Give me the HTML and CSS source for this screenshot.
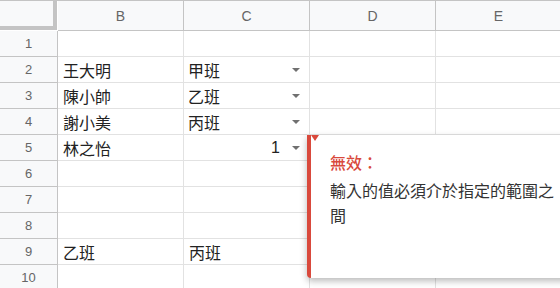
FILE: index.html
```html
<!DOCTYPE html>
<html lang="zh-Hant">
<head>
<meta charset="UTF-8">
<meta name="viewport" content="width=device-width, initial-scale=1.0">
<title>試算表</title>
<link rel="stylesheet" href="styles.css">
</head>
<body>
  <div id="sheet">
    <div class="corner"></div>
    <div class="col-head">B</div>
    <div class="col-head">C</div>
    <div class="col-head">D</div>
    <div class="col-head">E</div>

    <div class="row-head">1</div>
    <div class="cell"></div><div class="cell"></div><div class="cell"></div><div class="cell"></div>

    <div class="row-head">2</div>
    <div class="cell">王大明</div>
    <div class="cell drop">甲班<span class="arrow"></span></div>
    <div class="cell"></div><div class="cell"></div>

    <div class="row-head">3</div>
    <div class="cell">陳小帥</div>
    <div class="cell drop">乙班<span class="arrow"></span></div>
    <div class="cell"></div><div class="cell"></div>

    <div class="row-head">4</div>
    <div class="cell">謝小美</div>
    <div class="cell drop">丙班<span class="arrow"></span></div>
    <div class="cell"></div><div class="cell"></div>

    <div class="row-head">5</div>
    <div class="cell">林之怡</div>
    <div class="cell drop num">1<span class="arrow"></span></div>
    <div class="cell"></div><div class="cell"></div>

    <div class="row-head">6</div>
    <div class="cell"></div><div class="cell"></div><div class="cell"></div><div class="cell"></div>

    <div class="row-head">7</div>
    <div class="cell"></div><div class="cell"></div><div class="cell"></div><div class="cell"></div>

    <div class="row-head">8</div>
    <div class="cell"></div><div class="cell"></div><div class="cell"></div><div class="cell"></div>

    <div class="row-head">9</div>
    <div class="cell">乙班</div>
    <div class="cell">丙班</div>
    <div class="cell"></div><div class="cell"></div>

    <div class="row-head">10</div>
    <div class="cell"></div><div class="cell"></div><div class="cell"></div><div class="cell"></div>

    <div class="error-tip">
      <span class="tip-mark"></span>
      <div class="tip-title">無效：</div>
      <div class="tip-text">輸入的值必須介於指定的範圍之間</div>
    </div>
  </div>
</body>
</html>
```

FILE: styles.css
```css
body {
  margin: 0;
  padding: 0;
  background-color: #fff;
  overflow: hidden;
  font-family: "Liberation Sans", "Noto Sans CJK TC", sans-serif;
}
#sheet {
  position: relative;
  display: grid;
  grid-template-columns: 58px 126px 126px 126px 126px;
  grid-template-rows: 30px repeat(10, 26px);
  border-top: 1px solid #c4c4c4;
}
.corner {
  background-color: #f8f9fa;
  border-right: 4px solid #c4c4c4;
  border-bottom: 4px solid #c4c4c4;
  margin-right: 1px;
  margin-bottom: 1px;
}
.col-head {
  background-color: #f8f9fa;
  border-right: 1px solid #c4c4c4;
  border-bottom: 1px solid #c4c4c4;
  color: #666;
  font-size: 14px;
  display: flex;
  align-items: center;
  justify-content: center;
}
.row-head {
  background-color: #f8f9fa;
  border-right: 1px solid #c4c4c4;
  border-bottom: 1px solid #c4c4c4;
  color: #666;
  font-size: 13px;
  display: flex;
  align-items: center;
  justify-content: center;
}
.cell {
  border-right: 1px solid #e2e2e2;
  border-bottom: 1px solid #e2e2e2;
  color: #222;
  font-size: 16px;
  padding: 1px 0 0 5px;
  display: flex;
  align-items: center;
}
.drop {
  padding-left: 4px;
  padding-right: 9px;
}
.drop .arrow {
  margin-left: auto;
  width: 0;
  height: 0;
  border-left: 4px solid transparent;
  border-right: 4px solid transparent;
  border-top: 4px solid #707070;
}
.num {
  justify-content: flex-end;
}
.num .arrow {
  margin-left: 12px;
}
.error-tip {
  position: absolute;
  left: 307px;
  top: 134px;
  width: 250px;
  height: 128px;
  background-color: #fff;
  border-left: 4px solid #d9493c;
  border-radius: 0 0 4px 4px;
  padding: 15px 0 0 19px;
  box-shadow: 0 3px 7px rgba(0, 0, 0, 0.28);
  font-family: "Noto Sans CJK TC", sans-serif;
}
.tip-mark {
  position: absolute;
  left: 0;
  top: 0;
  width: 0;
  height: 0;
  border-left: 4px solid transparent;
  border-right: 4px solid transparent;
  border-top: 6px solid #d9493c;
}
.tip-title {
  color: #d9493c;
  font-size: 16px;
  font-weight: 500;
  line-height: 24px;
}
.tip-text {
  margin-top: 4px;
  color: #333;
  font-size: 16px;
  line-height: 25px;
  width: 232px;
}
```
